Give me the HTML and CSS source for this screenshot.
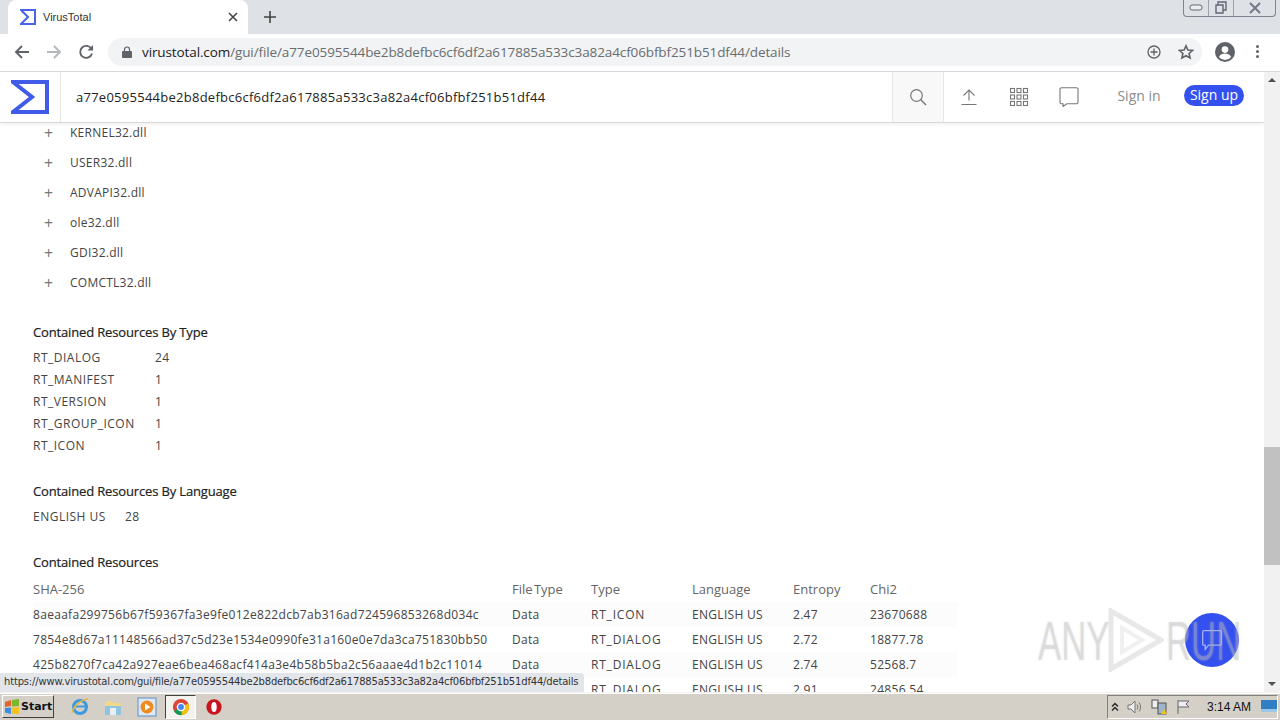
FILE: index.html
```html
<!DOCTYPE html>
<html lang="en">
<head>
    <meta charset="UTF-8">
    <title>VirusTotal</title>
    <link rel="stylesheet" href="styles.css">
</head>
<body>
    <!-- Browser tabs -->
    <div class="tabstrip">
        <div class="tab">
            <svg class="tab-logo" viewBox="0 0 16 16"><path d="M1 1h14v14H1l7-7z" fill="none" stroke="#4a63e8" stroke-width="2"/></svg>
            <span class="tab-title">VirusTotal</span>
            <svg class="tab-close" viewBox="0 0 10 10"><path d="M1 1l8 8M9 1l-8 8" stroke="#444" stroke-width="1.6"/></svg>
        </div>
        <svg class="new-tab" viewBox="0 0 12 12"><path d="M6 0v12M0 6h12" stroke="#444" stroke-width="1.6"/></svg>
        <div class="win-controls">
            <span class="win-btn win-min"><svg viewBox="0 0 14 8" width="14" height="8"><rect x="1" y="1" width="12" height="5" rx="2" fill="#eee" stroke="#667"/></svg></span>
            <span class="win-btn win-max"><svg viewBox="0 0 14 14" width="14" height="14"><path d="M4 4V1h8v8H9M2 4h7v8H2z" fill="none" stroke="#667" stroke-width="1.4"/></svg></span>
            <span class="win-btn win-close"><svg viewBox="0 0 14 12" width="14" height="12"><path d="M2 1l10 10M12 1L2 11" stroke="#778" stroke-width="2"/></svg></span>
        </div>
    </div>

    <!-- Address bar -->
    <div class="toolbar">
        <svg class="nav-icon" viewBox="0 0 16 16"><path d="M15 8H2M8 2L2 8l6 6" fill="none" stroke="#5f6368" stroke-width="1.9"/></svg>
        <svg class="nav-icon" viewBox="0 0 16 16"><path d="M1 8h13M8 2l6 6-6 6" fill="none" stroke="#b4b7bb" stroke-width="1.9"/></svg>
        <svg class="nav-icon" viewBox="0 0 16 16"><path d="M13.5 5A6 6 0 1 0 14 9.5" fill="none" stroke="#5f6368" stroke-width="1.9"/><path d="M15 1v5.5H9.5z" fill="#5f6368"/></svg>
        <div class="omnibox">
            <svg class="lock" viewBox="0 0 10 12"><path d="M2.5 5V3.5a2.5 2.5 0 0 1 5 0V5" fill="none" stroke="#5f6368" stroke-width="1.2"/><rect y="5" width="10" height="7" rx="1" fill="#5f6368"/></svg>
            <span class="url"><span class="url-host">virustotal.com</span>/gui/file/a77e0595544be2b8defbc6cf6df2a617885a533c3a82a4cf06bfbf251b51df44/details</span>
            <svg class="omni-icon" viewBox="0 0 14 14"><circle cx="7" cy="7" r="6" fill="none" stroke="#5f6368" stroke-width="1.3"/><path d="M7 3.5v7M3.5 7h7" stroke="#5f6368" stroke-width="1.3"/></svg>
            <svg class="omni-icon star" viewBox="0 0 16 16"><path d="M8 1.8l1.9 4.2 4.6.5-3.4 3 1 4.5L8 11.7 3.9 14l1-4.5-3.4-3 4.6-.5z" fill="none" stroke="#5f6368" stroke-width="1.6"/></svg>
        </div>
        <svg class="avatar" viewBox="0 0 20 20"><circle cx="10" cy="10" r="10" fill="#5f6368"/><circle cx="10" cy="7.6" r="3.3" fill="#fff"/><path d="M3.8 15c1.5-2.6 3.8-3.4 6.2-3.4s4.700.8 6.200 3.400a8 8 0 0 1-12.400 0z" fill="#fff"/></svg>
        <div class="menu-dots"><i></i><i></i><i></i></div>
    </div>

    <div class="viewport">
        <div class="app">
            <!-- Site header -->
            <div class="site-header">
                <div class="logo-box">
                    <svg class="logo" viewBox="0 0 38 34"><path d="M2 2h34v30H2l19-15z" fill="none" stroke="#3f5be8" stroke-width="4"/></svg>
                </div>
                <div class="search-text">a77e0595544be2b8defbc6cf6df2a617885a533c3a82a4cf06bfbf251b51df44</div>
                <div class="search-btn">
                    <svg viewBox="0 0 18 18" width="18" height="18"><circle cx="7.5" cy="7.5" r="5.8" fill="none" stroke="#777" stroke-width="1.2"/><path d="M11.6 11.6l5.4 5.4" stroke="#777" stroke-width="1.4"/></svg>
                </div>
                <div class="header-icon">
                    <svg viewBox="0 0 18 18" width="18" height="18"><path d="M9 12.5V2M3.5 7.5L9 2l5.500 5.500M1.500 16.500h15" fill="none" stroke="#777" stroke-width="1.1"/></svg>
                </div>
                <div class="header-icon">
                    <svg viewBox="0 0 20 20" width="20" height="20"><g fill="none" stroke="#777" stroke-width="1.1"><rect x="1.5" y="1.5" width="4" height="4"/><rect x="8" y="1.5" width="4" height="4"/><rect x="14.5" y="1.5" width="4" height="4"/><rect x="1.5" y="8" width="4" height="4"/><rect x="8" y="8" width="4" height="4"/><rect x="14.5" y="8" width="4" height="4"/><rect x="1.5" y="14.5" width="4" height="4"/><rect x="8" y="14.5" width="4" height="4"/><rect x="14.5" y="14.5" width="4" height="4"/></g></svg>
                </div>
                <div class="header-icon">
                    <svg viewBox="0 0 20 20" width="20" height="20"><path d="M2.5.8h15a1.500 1.500 0 0 1 1.500 1.500v13a1.500 1.500 0 0 1-1.500 1.500H8L4 19.500V16.800H2.500A1.500 1.500 0 0 1 1 15.300v-13A1.500 1.500 0 0 1 2.500.8z" fill="none" stroke="#777" stroke-width="1.1"/></svg>
                </div>
                <div class="sign-in">Sign in</div>
                <div class="sign-up">Sign up</div>
            </div>

            <!-- Details content, scrolled part way down -->
            <div class="content">
                <ul class="imports">
                    <li><span class="plus">+</span>KERNEL32.dll</li>
                    <li><span class="plus">+</span>USER32.dll</li>
                    <li><span class="plus">+</span>ADVAPI32.dll</li>
                    <li><span class="plus">+</span>ole32.dll</li>
                    <li><span class="plus">+</span>GDI32.dll</li>
                    <li><span class="plus">+</span>COMCTL32.dll</li>
                </ul>

                <h3 class="section-title first">Contained Resources By Type</h3>
                <div class="kv kv-type">
                    <span>RT_DIALOG</span><span>24</span>
                    <span>RT_MANIFEST</span><span>1</span>
                    <span>RT_VERSION</span><span>1</span>
                    <span>RT_GROUP_ICON</span><span>1</span>
                    <span>RT_ICON</span><span>1</span>
                </div>

                <h3 class="section-title">Contained Resources By Language</h3>
                <div class="kv kv-lang">
                    <span>ENGLISH US</span><span>28</span>
                </div>

                <h3 class="section-title">Contained Resources</h3>
                <table class="resources">
                    <thead>
                        <tr><th class="c-sha">SHA-256</th><th class="c-file">File Type</th><th class="c-type">Type</th><th class="c-lang">Language</th><th class="c-ent">Entropy</th><th>Chi2</th></tr>
                    </thead>
                    <tbody>
                        <tr><td>8aeaafa299756b67f59367fa3e9fe012e822dcb7ab316ad724596853268d034c</td><td>Data</td><td>RT_ICON</td><td>ENGLISH US</td><td>2.47</td><td>23670688</td></tr>
                        <tr><td>7854e8d67a11148566ad37c5d23e1534e0990fe31a160e0e7da3ca751830bb50</td><td>Data</td><td>RT_DIALOG</td><td>ENGLISH US</td><td>2.72</td><td>18877.78</td></tr>
                        <tr><td>425b8270f7ca42a927eae6bea468acf414a3e4b58b5ba2c56aaae4d1b2c11014</td><td>Data</td><td>RT_DIALOG</td><td>ENGLISH US</td><td>2.74</td><td>52568.7</td></tr>
                        <tr><td></td><td></td><td>RT_DIALOG</td><td>ENGLISH US</td><td>2.91</td><td>24856.54</td></tr>
                    </tbody>
                </table>
            </div>

            <div class="chat-fab">
                <svg viewBox="0 0 26 26" width="22" height="22"><path d="M3 2h20a1 1 0 0 1 1 1v15a1 1 0 0 1-1 1H9l-4 5v-5H3a1 1 0 0 1-1-1V3a1 1 0 0 1 1-1z" fill="none" stroke="#a3aef3" stroke-width="1.6"/></svg>
            </div>
            <div class="watermark">
                <span class="wm-any">ANY</span>
                <svg viewBox="0 0 56 64" width="56" height="64"><path d="M3 3l50 29L3 61z" fill="none" stroke="rgba(185,185,185,.32)" stroke-width="5"/><path d="M14 20l20 12-20 12z" fill="none" stroke="rgba(185,185,185,.22)" stroke-width="4"/></svg>
                <span class="wm-run">RUN</span>
            </div>
            <div class="status-bubble">https://www.virustotal.com/gui/file/a77e0595544be2b8defbc6cf6df2a617885a533c3a82a4cf06bfbf251b51df44/details</div>
        </div>

        <!-- Page scrollbar -->
        <div class="scrollbar">
            <div class="scroll-arrow up"></div>
            <div class="scroll-track"><div class="scroll-thumb"></div></div>
            <div class="scroll-arrow down"></div>
        </div>
    </div>

    <!-- Windows taskbar -->
    <div class="taskbar">
        <div class="start-btn">
            <svg viewBox="0 0 16 16" width="16" height="16"><path d="M1 3l6-2v6l-6 1z" fill="#e8632b"/><path d="M8 1l7-1v7l-7 .5z" fill="#7db52c"/><path d="M1 9l6-.5V15l-6-1.5z" fill="#3a8de0"/><path d="M8 8.5l7-.5v7l-7-.5z" fill="#f4c020"/></svg>
            Start
        </div>
        <div class="quick">
            <svg class="q-ie" viewBox="0 0 20 20" width="20" height="20"><circle cx="10" cy="10" r="6.5" fill="none" stroke="#3d9ae0" stroke-width="3"/><path d="M4 9.500h12" stroke="#3d9ae0" stroke-width="2"/><path d="M2 16C3 10 10 3 18 2" fill="none" stroke="#e8b93a" stroke-width="1.5"/></svg>
            <svg class="q-folder" viewBox="0 0 20 20" width="20" height="20"><path d="M2 4h7l2 2h7v12H2z" fill="#f0d98a"/><path d="M2 9h16v9H2z" fill="#8fc3de"/><rect x="7" y="11" width="6" height="7" fill="#e8eef2"/></svg>
            <svg class="q-media" viewBox="0 0 20 20" width="20" height="20"><rect x="1" y="1" width="18" height="18" fill="#dde8f4" stroke="#5b8fc4"/><circle cx="10" cy="10" r="6.5" fill="#ef8a1e"/><path d="M8 6.500l5.500 3.500L8 13.500z" fill="#fff"/></svg>
            <div class="q-active">
                <svg viewBox="0 0 20 20" width="18" height="18"><circle cx="10" cy="10" r="9" fill="#db4437"/><path d="M10 10L2.200 14.500A9 9 0 0 0 11 19z" fill="#0f9d58"/><path d="M10 10l8-4A9 9 0 0 1 11 19z" fill="#f4c20d"/><circle cx="10" cy="10" r="4" fill="#4285f4" stroke="#fff" stroke-width="1.5"/></svg>
            </div>
            <svg class="q-opera" viewBox="0 0 20 20" width="18" height="18"><circle cx="10" cy="10" r="8.5" fill="#c8141c"/><ellipse cx="10" cy="10" rx="3" ry="5.5" fill="#fff"/></svg>
        </div>
        <div class="tray">
            <svg viewBox="0 0 8 10" width="8" height="10"><path d="M1 4.500l3-3 3 3M1 8.500l3-3 3 3" fill="none" stroke="#222" stroke-width="1.4"/></svg>
            <svg viewBox="0 0 16 14" width="16" height="14"><path d="M1 5h3l4-4v12L4 9H1z" fill="#eee" stroke="#777"/><path d="M10 4.500a4 4 0 0 1 0 5M12 2.500a7 7 0 0 1 0 9" fill="none" stroke="#777"/></svg>
            <svg viewBox="0 0 16 16" width="16" height="16"><rect x="1" y="1" width="6" height="8" fill="#eee" stroke="#555"/><rect x="7" y="4" width="8" height="11" fill="#9fb4c7" stroke="#555"/><path d="M10 15l3-5 3 5z" fill="#f1c40f"/></svg>
            <svg viewBox="0 0 16 16" width="16" height="16"><path d="M3 1v14M3 2h11l-3 3 3 3H3" fill="#eee" stroke="#666"/></svg>
            <span class="clock">3:14 AM</span>
            <svg class="show-desktop" viewBox="0 0 16 14" width="16" height="14"><rect width="16" height="12" fill="#2f7fc4"/><rect y="9" width="16" height="3" fill="#9cc6e6"/></svg>
        </div>
    </div>
</body>
</html>
```

FILE: styles.css
```css
* {
    margin: 0;
    padding: 0;
    box-sizing: border-box;
}

html, body {
    width: 1280px;
    height: 720px;
    overflow: hidden;
}

body {
    display: flex;
    flex-direction: column;
    font-family: "Open Sans", sans-serif;
    color: #3b3b3b;
    background: #fff;
}

/* Browser tabs */
.tabstrip {
    height: 34px;
    background: #dee1e6;
    display: flex;
    align-items: flex-end;
    padding-left: 8px;
    position: relative;
}

.tab {
    width: 240px;
    height: 34px;
    background: #fff;
    border-radius: 8px 8px 0 0;
    display: flex;
    align-items: center;
    padding: 0 8px 0 12px;
}

.tab-logo {
    width: 16px;
    height: 16px;
    margin-right: 7px;
}

.tab-title {
    flex: 1;
    font-family: "Liberation Sans", sans-serif;
    font-size: 11px;
    color: #333;
}

.tab-close {
    width: 10px;
    height: 10px;
    margin-right: 2px;
}

.new-tab {
    width: 12px;
    height: 12px;
    margin: 0 0 11px 16px;
}

.win-controls {
    position: absolute;
    top: 0;
    right: 4px;
    width: 93px;
    height: 17px;
    display: flex;
    border: 1px solid #7c8590;
    border-top: none;
    border-radius: 0 0 4px 4px;
    background: #dee1e6;
}

.win-btn {
    display: flex;
    align-items: center;
    justify-content: center;
    border-right: 1px solid #9aa2ac;
}

.win-min { width: 25px; }
.win-max { width: 25px; }
.win-close { flex: 1; border-right: none; }

/* Address bar */
.toolbar {
    height: 38px;
    padding-bottom: 2px;
    background: #fff;
    border-bottom: 1px solid #d5d7da;
    display: flex;
    align-items: center;
    padding-left: 14px;
}

.nav-icon {
    width: 16px;
    height: 16px;
    margin-right: 16px;
}

.omnibox {
    width: 1094px;
    height: 28px;
    margin-left: -2px;
    background: #f1f3f4;
    border-radius: 14px;
    display: flex;
    align-items: center;
    padding: 0 8px 0 14px;
}

.lock {
    width: 10px;
    height: 12px;
    margin-right: 10px;
}

.url {
    flex: 1;
    font-family: "Open Sans", sans-serif;
    font-size: 13.5px;
    letter-spacing: -0.11px;
    color: #6a6d70;
    white-space: nowrap;
}

.url-host {
    color: #202124;
}

.omni-icon {
    width: 14px;
    height: 14px;
}

.star {
    width: 16px;
    height: 16px;
    margin-left: 17px;
}

.avatar {
    width: 20px;
    height: 20px;
    margin-left: 13px;
}

.menu-dots {
    margin-left: 21px;
    display: flex;
    flex-direction: column;
    gap: 2px;
}

.menu-dots i {
    width: 3px;
    height: 3px;
    border-radius: 50%;
    background: #5f6368;
    display: block;
}

/* Page area */
.viewport {
    flex: 1;
    display: flex;
    min-height: 0;
}

.app {
    flex: 1;
    position: relative;
    overflow: hidden;
    display: flex;
    flex-direction: column;
}

.site-header {
    height: 51px;
    flex-shrink: 0;
    background: #fff;
    border-bottom: 1px solid #d9d9d9;
    box-shadow: 0 1px 4px rgba(0,0,0,0.08);
    display: flex;
    align-items: center;
    position: relative;
    z-index: 2;
}

.logo-box {
    width: 61px;
    height: 50px;
    border-right: 1px solid #e6e6e6;
    display: flex;
    align-items: center;
    justify-content: center;
}

.logo {
    width: 38px;
    height: 34px;
}

.search-text {
    flex: 1;
    padding-left: 15px;
    font-size: 13px;
    letter-spacing: 0.26px;
    color: #222;
    white-space: nowrap;
}

.search-btn {
    width: 52px;
    height: 50px;
    background: #f8f8f8;
    border-left: 1px solid #e6e6e6;
    border-right: 1px solid #e6e6e6;
    display: flex;
    align-items: center;
    justify-content: center;
}

.header-icon {
    width: 50px;
    display: flex;
    align-items: center;
    justify-content: center;
}

.sign-in {
    width: 90px;
    margin-bottom: 4px;
    text-align: center;
    font-size: 14px;
    color: #8c8c8c;
}

.sign-up {
    width: 60px;
    height: 21px;
    line-height: 20px;
    margin: 0 20px 3px 0;
    text-align: center;
    font-size: 14px;
    color: #fff;
    background: #3450ee;
    border-radius: 11px;
}

.content {
    flex: 1;
    padding: 0 0 0 33px;
    font-size: 12px;
}

/* Import list */
.imports {
    list-style: none;
    margin-top: -5px;
}

.imports li {
    height: 30px;
    line-height: 20px;
    display: flex;
    align-items: center;
    font-size: 12px;
    letter-spacing: 0.25px;
    color: #444;
}

.plus {
    width: 37px;
    padding-left: 11px;
    font-size: 16px;
    color: #777;
}

.section-title {
    font-size: 13px;
    font-weight: 400;
    letter-spacing: -0.15px;
    color: #222;
    height: 20px;
    line-height: 20px;
    margin-top: 25px;
    -webkit-text-stroke: 0.2px #222;
}

.section-title.first {
    margin-top: 24px;
}

.kv {
    display: grid;
    grid-auto-rows: 22px;
    align-items: center;
    margin-top: 4px;
    letter-spacing: 0.5px;
    color: #444;
}

.kv-type {
    grid-template-columns: 122px auto;
    justify-content: start;
}

.kv-lang {
    grid-template-columns: 92px auto;
    justify-content: start;
}

/* Resources table */
.resources {
    border-collapse: collapse;
    table-layout: fixed;
    width: 925px;
    margin-top: 4px;
}

.resources th {
    height: 26px;
    text-align: left;
    font-weight: 400;
    font-size: 13px;
    word-spacing: -2px;
    color: #666;
}

.resources td {
    height: 25px;
    color: #444;
    letter-spacing: 0.3px;
    white-space: nowrap;
}

.resources td:nth-child(3) {
    letter-spacing: 0.8px;
}

.resources tbody tr:nth-child(odd) {
    background: #fcfcfc;
}

.c-sha { width: 479px; }
.c-file { width: 79px; }
.c-type { width: 101px; }
.c-lang { width: 101px; }
.c-ent { width: 77px; }

/* Sandbox watermark, sits over the chat button */
.watermark {
    position: absolute;
    left: 1038px;
    top: 536px;
    height: 64px;
    display: flex;
    align-items: center;
    font-size: 56px;
    color: rgba(185,185,185,0.32);
    font-family: "Liberation Sans", sans-serif;
    text-shadow: 0 0 3px rgba(190,190,190,0.35);
    z-index: 2;
}

.wm-any, .wm-run {
    display: inline-block;
    transform: scaleX(0.62);
    transform-origin: left center;
}

.wm-any { width: 70px; }
.wm-run { width: 70px; margin-left: 2px; }

.chat-fab {
    position: absolute;
    left: 1185px;
    top: 541px;
    width: 54px;
    height: 54px;
    border-radius: 50%;
    background: #3450ee;
    display: flex;
    align-items: center;
    justify-content: center;
    z-index: 1;
}

.status-bubble {
    position: absolute;
    left: 0;
    bottom: 0;
    height: 19px;
    line-height: 18px;
    padding: 0 6px 0 4px;
    background: #e2e5e9;
    border-top-right-radius: 4px;
    font-family: "DejaVu Sans", sans-serif;
    font-size: 10px;
    letter-spacing: -0.18px;
    color: #333;
    white-space: nowrap;
    z-index: 3;
}

/* Scrollbar */
.scrollbar {
    width: 16px;
    background: #f1f1f1;
    display: flex;
    flex-direction: column;
}

.scroll-arrow {
    height: 16px;
    display: flex;
    align-items: center;
    justify-content: center;
}

.scroll-arrow::before {
    content: "";
    border-left: 4px solid transparent;
    border-right: 4px solid transparent;
}

.scroll-arrow.up::before {
    border-bottom: 4px solid #505050;
}

.scroll-arrow.down::before {
    border-top: 4px solid #505050;
}

.scroll-track {
    flex: 1;
    padding-top: 359px;
}

.scroll-thumb {
    height: 118px;
    background: #c1c1c1;
}

/* Windows taskbar */
.taskbar {
    height: 28px;
    background: #d4d0c8;
    border-top: 1px solid #f4f2ee;
    box-shadow: inset 0 1px 0 #fff;
    display: flex;
    align-items: center;
    font-family: "DejaVu Sans", sans-serif;
    font-size: 11px;
    color: #111;
}

.start-btn {
    width: 52px;
    height: 23px;
    margin-left: 2px;
    display: flex;
    align-items: center;
    gap: 1px;
    padding-left: 1px;
    font-weight: 700;
    font-size: 11px;
    background: #d4d0c8;
    border: 1px solid;
    border-color: #fff #404040 #404040 #fff;
}

.quick {
    display: flex;
    align-items: center;
    margin-left: 16px;
}

.q-folder { margin-left: 13px; }
.q-media { margin-left: 14px; }

.q-active {
    width: 31px;
    height: 24px;
    margin-left: 8px;
    background: #f3f2ee;
    border: 1px solid;
    border-color: #404040 #fff #fff #404040;
    display: flex;
    align-items: center;
    justify-content: center;
}

.q-opera { margin-left: 9px; }

.tray {
    margin-left: auto;
    margin-right: 2px;
    width: 171px;
    height: 24px;
    border: 1px solid;
    border-color: #808080 #fff #fff #808080;
    display: flex;
    align-items: center;
    padding-left: 3px;
    gap: 8px;
}

.clock {
    margin-left: 8px;
    font-family: "Liberation Sans", sans-serif;
    font-size: 12px;
    white-space: nowrap;
}

.show-desktop {
    margin-left: 2px;
}
```
